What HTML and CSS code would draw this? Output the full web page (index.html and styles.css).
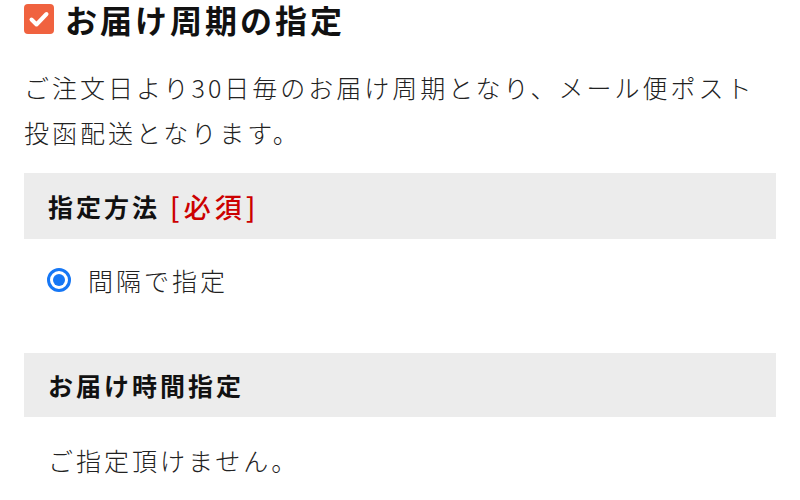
FILE: index.html
```html
<!DOCTYPE html>
<html lang="ja">
<head>
<meta charset="utf-8">
<link rel="stylesheet" href="styles.css">
</head>
<body>
<div class="page">
  <h2 class="title">
    <svg class="check" width="30" height="30" viewBox="0 0 30 30"><rect x="0" y="0" width="30" height="30" rx="4" fill="#f0623f"/><path d="M7.5 15.5 L12.5 20.5 L22.5 10" fill="none" stroke="#fff" stroke-width="4" stroke-linecap="round" stroke-linejoin="round"/></svg>
    <span>お届け周期の指定</span>
  </h2>
  <p class="desc">ご注文日より30日毎のお届け周期となり、メール便ポスト投函配送となります。</p>
  <div class="box box-first"><span class="box-label">指定方法</span><span class="req">[必須]</span></div>
  <div class="radio-row">
    <span class="radio"><span class="dot"></span></span>
    <span class="radio-label">間隔で指定</span>
  </div>
  <div class="box box-second"><span class="box-label">お届け時間指定</span></div>
  <p class="note">ご指定頂けません。</p>
</div>
</body>
</html>
```
FILE: styles.css
```css
html, body {
  margin: 0;
  padding: 0;
  background: #fff;
}
body {
  font-family: "Noto Sans CJK JP", "Noto Sans", sans-serif;
  font-weight: 300;
  color: #222;
}
.page {
  padding: 0 24px;
}
.title {
  display: flex;
  align-items: center;
  gap: 11px;
  height: 38px;
  margin: 0;
  font-size: 32px;
  font-weight: 700;
  letter-spacing: 3px;
  color: #111;
  line-height: 38px;
}
.check {
  flex: none;
  display: block;
}
.desc {
  margin: 27px 0 0;
  font-size: 25px;
  line-height: 45px;
  letter-spacing: 3px;
}
.box {
  background: #ececec;
  display: flex;
  align-items: center;
  padding: 0 24px;
  font-weight: 700;
  font-size: 25px;
  letter-spacing: 3px;
  color: #111;
}
.box-first {
  margin-top: 18px;
  height: 66px;
}
.box-second {
  margin-top: 53px;
  height: 64px;
}
.req {
  color: #cc0000;
  font-weight: 500;
  font-size: 27px;
  letter-spacing: 4px;
  margin-left: 10px;
}
.radio-row {
  display: flex;
  align-items: center;
  gap: 17px;
  height: 40px;
  margin-top: 21px;
  padding-left: 23px;
}
.radio {
  width: 24px;
  height: 24px;
  box-sizing: border-box;
  border: 3px solid #1677f5;
  border-radius: 50%;
  display: flex;
  align-items: center;
  justify-content: center;
}
.dot {
  width: 12px;
  height: 12px;
  border-radius: 50%;
  background: #1677f5;
}
.radio-label {
  font-size: 25px;
  letter-spacing: 3px;
  line-height: 40px;
}
.note {
  margin: 23px 0 0;
  padding-left: 24px;
  font-size: 25px;
  line-height: 40px;
  letter-spacing: 3px;
}
```
